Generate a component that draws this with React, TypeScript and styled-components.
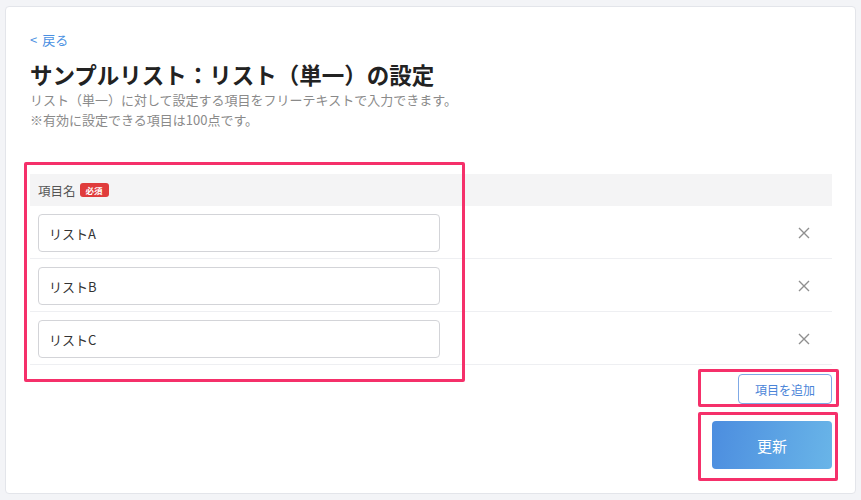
import React from "react";
import styled, { createGlobalStyle } from "styled-components";

const GlobalStyle = createGlobalStyle`
  html, body {
    margin: 0;
    padding: 0;
    background: #f3f4f7;
    font-family: "Noto Sans CJK JP", "Noto Sans", sans-serif;
    color: #333;
  }
`;

const Page = styled.div`
  padding: 6px 5px 5px 5px;
`;

const Card = styled.div`
  background: #fff;
  border: 1px solid #e3e5ea;
  border-radius: 4px;
  padding: 19px 23px 24px 24px;
`;

const BackLink = styled.a`
  display: inline-block;
  font-size: 13px;
  line-height: 18px;
  color: #4a90e2;
  text-decoration: none;
  word-spacing: 2px;
`;

const Title = styled.h1`
  margin: 9px 0 0;
  font-size: 22.5px;
  line-height: 30px;
  font-weight: 700;
  color: #222;
`;

const Desc = styled.p`
  margin: 1px 0 0;
  font-size: 13px;
  line-height: 20px;
  color: #8a8a8a;
`;

const Table = styled.div`
  position: relative;
  margin-top: 44px;
`;

const Highlight = styled.div`
  position: absolute;
  left: -6px;
  top: -12px;
  width: 435px;
  height: 214px;
  border: 3px solid #f5306a;
  border-radius: 2px;
  pointer-events: none;
`;

const HeaderRow = styled.div`
  display: flex;
  align-items: center;
  gap: 4px;
  height: 32px;
  padding-left: 8px;
  background: #f4f4f5;
  font-size: 12.5px;
  color: #555;
`;

const Badge = styled.span`
  display: inline-flex;
  align-items: center;
  justify-content: center;
  width: 29px;
  height: 14px;
  border-radius: 3px;
  background: #e03c3c;
  color: #fff;
  font-size: 8.5px;
  font-weight: 700;
`;

const Row = styled.div`
  display: flex;
  align-items: center;
  justify-content: space-between;
  padding: 8px 22px 6px 8px;
  border-bottom: 1px solid #eeeff2;
`;

const Input = styled.input`
  box-sizing: border-box;
  width: 402px;
  height: 38px;
  padding: 0 10px;
  border: 1px solid #d3d4d8;
  border-radius: 4px;
  font-family: "Noto Sans CJK JP", "Noto Sans", sans-serif;
  font-size: 13px;
  color: #333;
  outline: none;
`;

const RemoveButton = styled.button`
  display: flex;
  padding: 0;
  border: none;
  background: none;
  cursor: pointer;
`;

const Actions = styled.div`
  display: flex;
  flex-direction: column;
  align-items: flex-end;
  gap: 17px;
  margin-top: 9px;
`;

const Marked = styled.div<{ $inset: string }>`
  position: relative;
  display: flex;
  &::after {
    content: "";
    position: absolute;
    inset: ${({ $inset }) => $inset};
    border: 3px solid #f5306a;
    border-radius: 2px;
    pointer-events: none;
  }
`;

const AddButton = styled.button`
  width: 94px;
  height: 30px;
  border: 1px solid #7fa9e6;
  border-radius: 4px;
  background: #fff;
  color: #4a84d8;
  font-family: "Noto Sans CJK JP", "Noto Sans", sans-serif;
  font-size: 12px;
  cursor: pointer;
`;

const SubmitButton = styled.button`
  width: 120px;
  height: 48px;
  border: none;
  border-radius: 4px;
  background: linear-gradient(100deg, #4c8ddf 0%, #69b5e8 100%);
  color: #fff;
  font-family: "Noto Sans CJK JP", "Noto Sans", sans-serif;
  font-size: 15px;
  cursor: pointer;
`;

const CloseIcon = () => (
  <svg width="12" height="12" viewBox="0 0 12 12">
    <path d="M1 1L11 11M11 1L1 11" stroke="#8f8f8f" strokeWidth="1.4" fill="none" />
  </svg>
);

const items = ["リストA", "リストB", "リストC"];

export default function App() {
  return (
    <Page>
      <GlobalStyle />
      <Card>
        <BackLink href="#">&lt; 戻る</BackLink>
        <Title>サンプルリスト：リスト（単一）の設定</Title>
        <Desc>
          リスト（単一）に対して設定する項目をフリーテキストで入力できます。
          <br />
          ※有効に設定できる項目は100点です。
        </Desc>
        <Table>
          <HeaderRow>
            項目名<Badge>必須</Badge>
          </HeaderRow>
          {items.map((item) => (
            <Row key={item}>
              <Input defaultValue={item} />
              <RemoveButton aria-label="削除">
                <CloseIcon />
              </RemoveButton>
            </Row>
          ))}
          <Highlight />
        </Table>
        <Actions>
          <Marked $inset="-5px -7px -3px -40px">
            <AddButton>項目を追加</AddButton>
          </Marked>
          <Marked $inset="-9px -6px -12px -14px">
            <SubmitButton>更新</SubmitButton>
          </Marked>
        </Actions>
      </Card>
    </Page>
  );
}
